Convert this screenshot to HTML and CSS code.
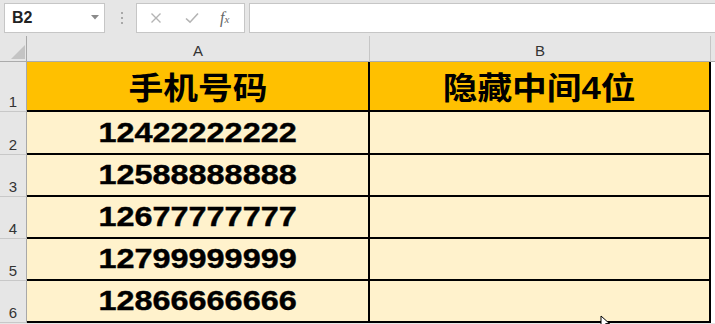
FILE: index.html
```html
<!DOCTYPE html>
<html lang="zh">
<head>
<meta charset="utf-8">
<title>Sheet</title>
<link rel="stylesheet" href="styles.css">
</head>
<body>
<div class="app">
  <div class="toolbar">
    <div class="namebox">
      <span class="ref">B2</span>
      <svg class="dd" width="8" height="5" viewBox="0 0 8 5"><path d="M0 0H8L4 4.5Z" fill="#8a8a8a"/></svg>
    </div>
    <div class="sep"><i></i><i></i><i></i></div>
    <div class="fxbox">
      <svg class="ic" width="12" height="12" viewBox="0 0 12 12"><path d="M1.5 1.5L10.5 10.5M10.5 1.5L1.5 10.5" stroke="#b4b4b4" stroke-width="1.4" fill="none"/></svg>
      <svg class="ic" width="14" height="12" viewBox="0 0 14 12"><path d="M1 6.5L5 10.2L13 1.5" stroke="#b4b4b4" stroke-width="1.6" fill="none"/></svg>
      <span class="fx">f<small>x</small></span>
    </div>
    <div class="formula"></div>
  </div>
  <div class="sheet">
    <div class="corner"><svg width="14" height="14" viewBox="0 0 14 14"><path d="M14 0V14H0Z" fill="#c4c4c4"/></svg></div>
    <div class="colh">A</div>
    <div class="colh">B</div>
    <div class="colh rest"></div>

    <div class="rowh">1</div>
    <div class="cell head"><span class="cjk">手机号码</span></div>
    <div class="cell head"><span class="cjk">隐藏中间4位</span></div>
    <div class="blank"></div>

    <div class="rowh">2</div>
    <div class="cell"><span class="num">12422222222</span></div>
    <div class="cell"></div>
    <div class="blank"></div>

    <div class="rowh">3</div>
    <div class="cell"><span class="num">12588888888</span></div>
    <div class="cell"></div>
    <div class="blank"></div>

    <div class="rowh">4</div>
    <div class="cell"><span class="num">12677777777</span></div>
    <div class="cell"></div>
    <div class="blank"></div>

    <div class="rowh">5</div>
    <div class="cell"><span class="num">12799999999</span></div>
    <div class="cell"></div>
    <div class="blank"></div>

    <div class="rowh">6</div>
    <div class="cell"><span class="num">12866666666</span></div>
    <div class="cell"></div>
    <div class="blank"></div>
  </div>
  <svg class="cursor" width="12" height="14" viewBox="0 0 12 14"><path d="M1 1V12L3.8 9.4L6 13.5L7.8 12.6L5.7 8.6H9.5Z" fill="#fff" stroke="#000" stroke-width="1"/></svg>
</div>
</body>
</html>
```
FILE: styles.css
```css
* { box-sizing: border-box; }
html, body { margin: 0; padding: 0; }
body { width: 715px; height: 324px; overflow: hidden; background: #e6e6e6; font-family: "Liberation Sans", "Noto Sans CJK SC", sans-serif; }
.app { position: relative; width: 715px; height: 324px; overflow: hidden; }

.toolbar { height: 36px; display: flex; padding: 3px 0 0 4px; }
.namebox { width: 101px; height: 30px; background: #fff; border: 1px solid #c6c6c6; display: flex; align-items: center; justify-content: space-between; padding: 0 5px 0 7px; }
.ref { font-weight: bold; font-size: 16px; color: #222; }
.dd { margin-bottom: 2px; }
.sep { width: 31px; display: flex; flex-direction: column; align-items: center; justify-content: center; gap: 3px; height: 30px; padding-left: 2px; }
.sep i { width: 2px; height: 2px; background: #a8a8a8; display: block; }
.fxbox { width: 109px; height: 30px; background: #fff; border: 1px solid #c6c6c6; display: flex; align-items: center; padding-left: 13px; gap: 0; }
.fxbox .ic:first-child { margin-right: 23px; }
.fxbox .ic:nth-child(2) { margin-right: 21px; }
.fx { font-family: "Liberation Serif", serif; font-style: italic; font-size: 16px; color: #666; }
.fx small { font-size: 11px; }
.formula { flex: 1; height: 30px; margin-left: 4px; background: #fff; border: 1px solid #c6c6c6; border-right: none; }

.sheet { display: grid; grid-template-columns: 27px 343px 341px 1fr; grid-template-rows: 26px 50px 43px 42px 42px 42px 42px; }
.corner { border-right: 1px solid #a8a8a8; border-bottom: 1px solid #ababab; display: flex; align-items: flex-end; justify-content: flex-end; padding: 0 1px 2px 0; }
.colh { border-bottom: 1px solid #ababab; border-right: 1px solid #c6c6c6; font-size: 15px; color: #333; display: flex; align-items: flex-end; justify-content: center; padding-bottom: 2px; padding-top: 5px; }
.colh.rest { border-right: none; }
.rowh { background: #e6e6e6; border-right: 1px solid #a8a8a8; border-bottom: 1px solid #c8c8c8; font-size: 15px; color: #333; display: flex; align-items: flex-end; justify-content: center; padding-bottom: 1px; }
.cell { background: #fff2cc; border-right: 2px solid #000; border-bottom: 2px solid #000; display: flex; align-items: center; justify-content: center; overflow: hidden; }
.cell.head { background: #ffc000; padding-top: 4px; }
.blank { background: #fff; }

.cjk { display: inline-block; font-weight: bold; font-size: 31px; color: #000; transform: scaleX(1.12); line-height: 1; }
.num { display: inline-block; font-weight: bold; font-size: 27px; color: #000; transform: scaleX(1.2); line-height: 1; padding-top: 1px; -webkit-text-stroke: 0.4px #000; }

.cursor { position: absolute; left: 600px; top: 315px; }
```
